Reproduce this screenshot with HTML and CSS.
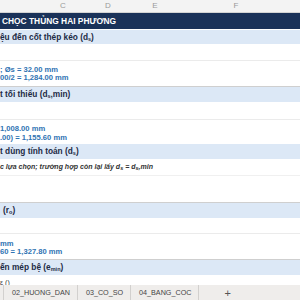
FILE: index.html
```html
<!DOCTYPE html>
<html>
<head>
    <title>Kiem tra choc thung</title>
    <link rel="stylesheet" href="styles.css">
</head>
<body>
    <div class="sheet">
        <div class="colhead">
            <div></div>
            <div>C</div>
            <div>D</div>
            <div>E</div>
            <div>F</div>
            <div></div>
        </div>

        <div class="title">CHỌC THỦNG HAI PHƯƠNG</div>

        <div class="band band-1">ệu đến cốt thép kéo (d<sub>s</sub>)</div>
        <div class="blank b-16"></div>
        <div class="values v-1">
            <div>; Øs = 32.00 mm</div>
            <div>00/2 = 1,284.00 mm</div>
        </div>

        <div class="band shade">t tối thiểu (d<sub>s</sub>,min)</div>
        <div class="blank b-17"></div>
        <div class="values v-2">
            <div>1,008.00 mm</div>
            <div>.00) = 1,155.60 mm</div>
        </div>

        <div class="band">t dùng tính toán (d<sub>s</sub>)</div>
        <div class="note">c lựa chọn; trường hợp còn lại lấy d<sub>s</sub> = d<sub>s</sub>,min</div>
        <div class="blank b-26"></div>

        <div class="band shade r0">(r<sub>o</sub>)</div>
        <div class="blank b-15"></div>
        <div class="values v-3">
            <div>mm</div>
            <div>60 = 1,327.80 mm</div>
        </div>

        <div class="band shade">ến mép bệ (e<sub>min</sub>)</div>
        <div class="cut">ε ()</div>
    </div>

    <div class="tabs">
        <div class="tab first"></div>
        <div class="tab">02_HUONG_DAN</div>
        <div class="tab">03_CO_SO</div>
        <div class="tab">04_BANG_COC</div>
        <div class="add">+</div>
    </div>
</body>
</html>
```

FILE: styles.css
```css
html, body {
    margin: 0;
    padding: 0;
    width: 300px;
    height: 300px;
    overflow: hidden;
    background-color: #ffffff;
    font-family: "Liberation Sans", Arial, sans-serif;
}
.sheet {
    height: 285px;
    overflow: hidden;
}
.colhead {
    display: grid;
    grid-template-columns: 41px 44px 46px 48px 114px 1fr;
    height: 12px;
    line-height: 12px;
    background-color: #f3f3f3;
    border-bottom: 1px solid #d4d4d4;
    color: #9a9a9a;
    font-size: 8px;
    text-align: center;
}
.title {
    height: 16px;
    line-height: 16px;
    padding-left: 2px;
    background-color: #1a3259;
    color: #ffffff;
    font-weight: bold;
    font-size: 8.4px;
    white-space: nowrap;
}
.band {
    height: 15px;
    line-height: 15px;
    background-color: #dce8f6;
    color: #1d2b45;
    font-weight: bold;
    font-size: 8.3px;
    white-space: nowrap;
}
.band-1 {
    margin-top: 1px;
    height: 14px;
    line-height: 14px;
}
.shade {
    border-top: 1px solid #cfcfcf;
}
.r0 {
    padding-left: 3px;
}
sub {
    font-size: 5.5px;
    vertical-align: -1px;
    line-height: 0;
}
.blank {
    border-bottom: 1px solid #ebebeb;
}
.b-16 { height: 16px; }
.b-17 { height: 17px; }
.b-15 { height: 15px; }
.b-26 {
    height: 26px;
    border-bottom: none;
}
.values {
    color: #2f73b3;
    font-weight: bold;
    font-size: 7.6px;
    white-space: nowrap;
}
.values div {
    height: 8px;
    line-height: 8px;
}
.v-1 {
    padding: 5px 0 4px 0;
}
.v-2 {
    padding: 4px 0 2px 0;
}
.v-2 div {
    height: 9px;
    line-height: 9px;
}
.v-3 {
    padding: 6px 0 3px 0;
}
.note {
    height: 16px;
    line-height: 16px;
    color: #333333;
    font-style: italic;
    font-weight: bold;
    font-size: 7px;
    white-space: nowrap;
    border-bottom: 1px solid #f0f0f0;
}
.cut {
    padding-top: 4px;
    font-size: 7px;
    color: #333333;
}
.tabs {
    display: flex;
    align-items: center;
    height: 15px;
    background-color: #efedeb;
    color: #444444;
    font-size: 7.2px;
}
.tab {
    padding: 0 7px 0 8px;
    height: 15px;
    line-height: 15px;
    border-right: 1px solid #d2d0ce;
    white-space: nowrap;
}
.tab.first {
    width: 3px;
    padding: 0;
}
.add {
    margin-left: 25px;
    font-size: 11px;
    color: #555555;
}
```
